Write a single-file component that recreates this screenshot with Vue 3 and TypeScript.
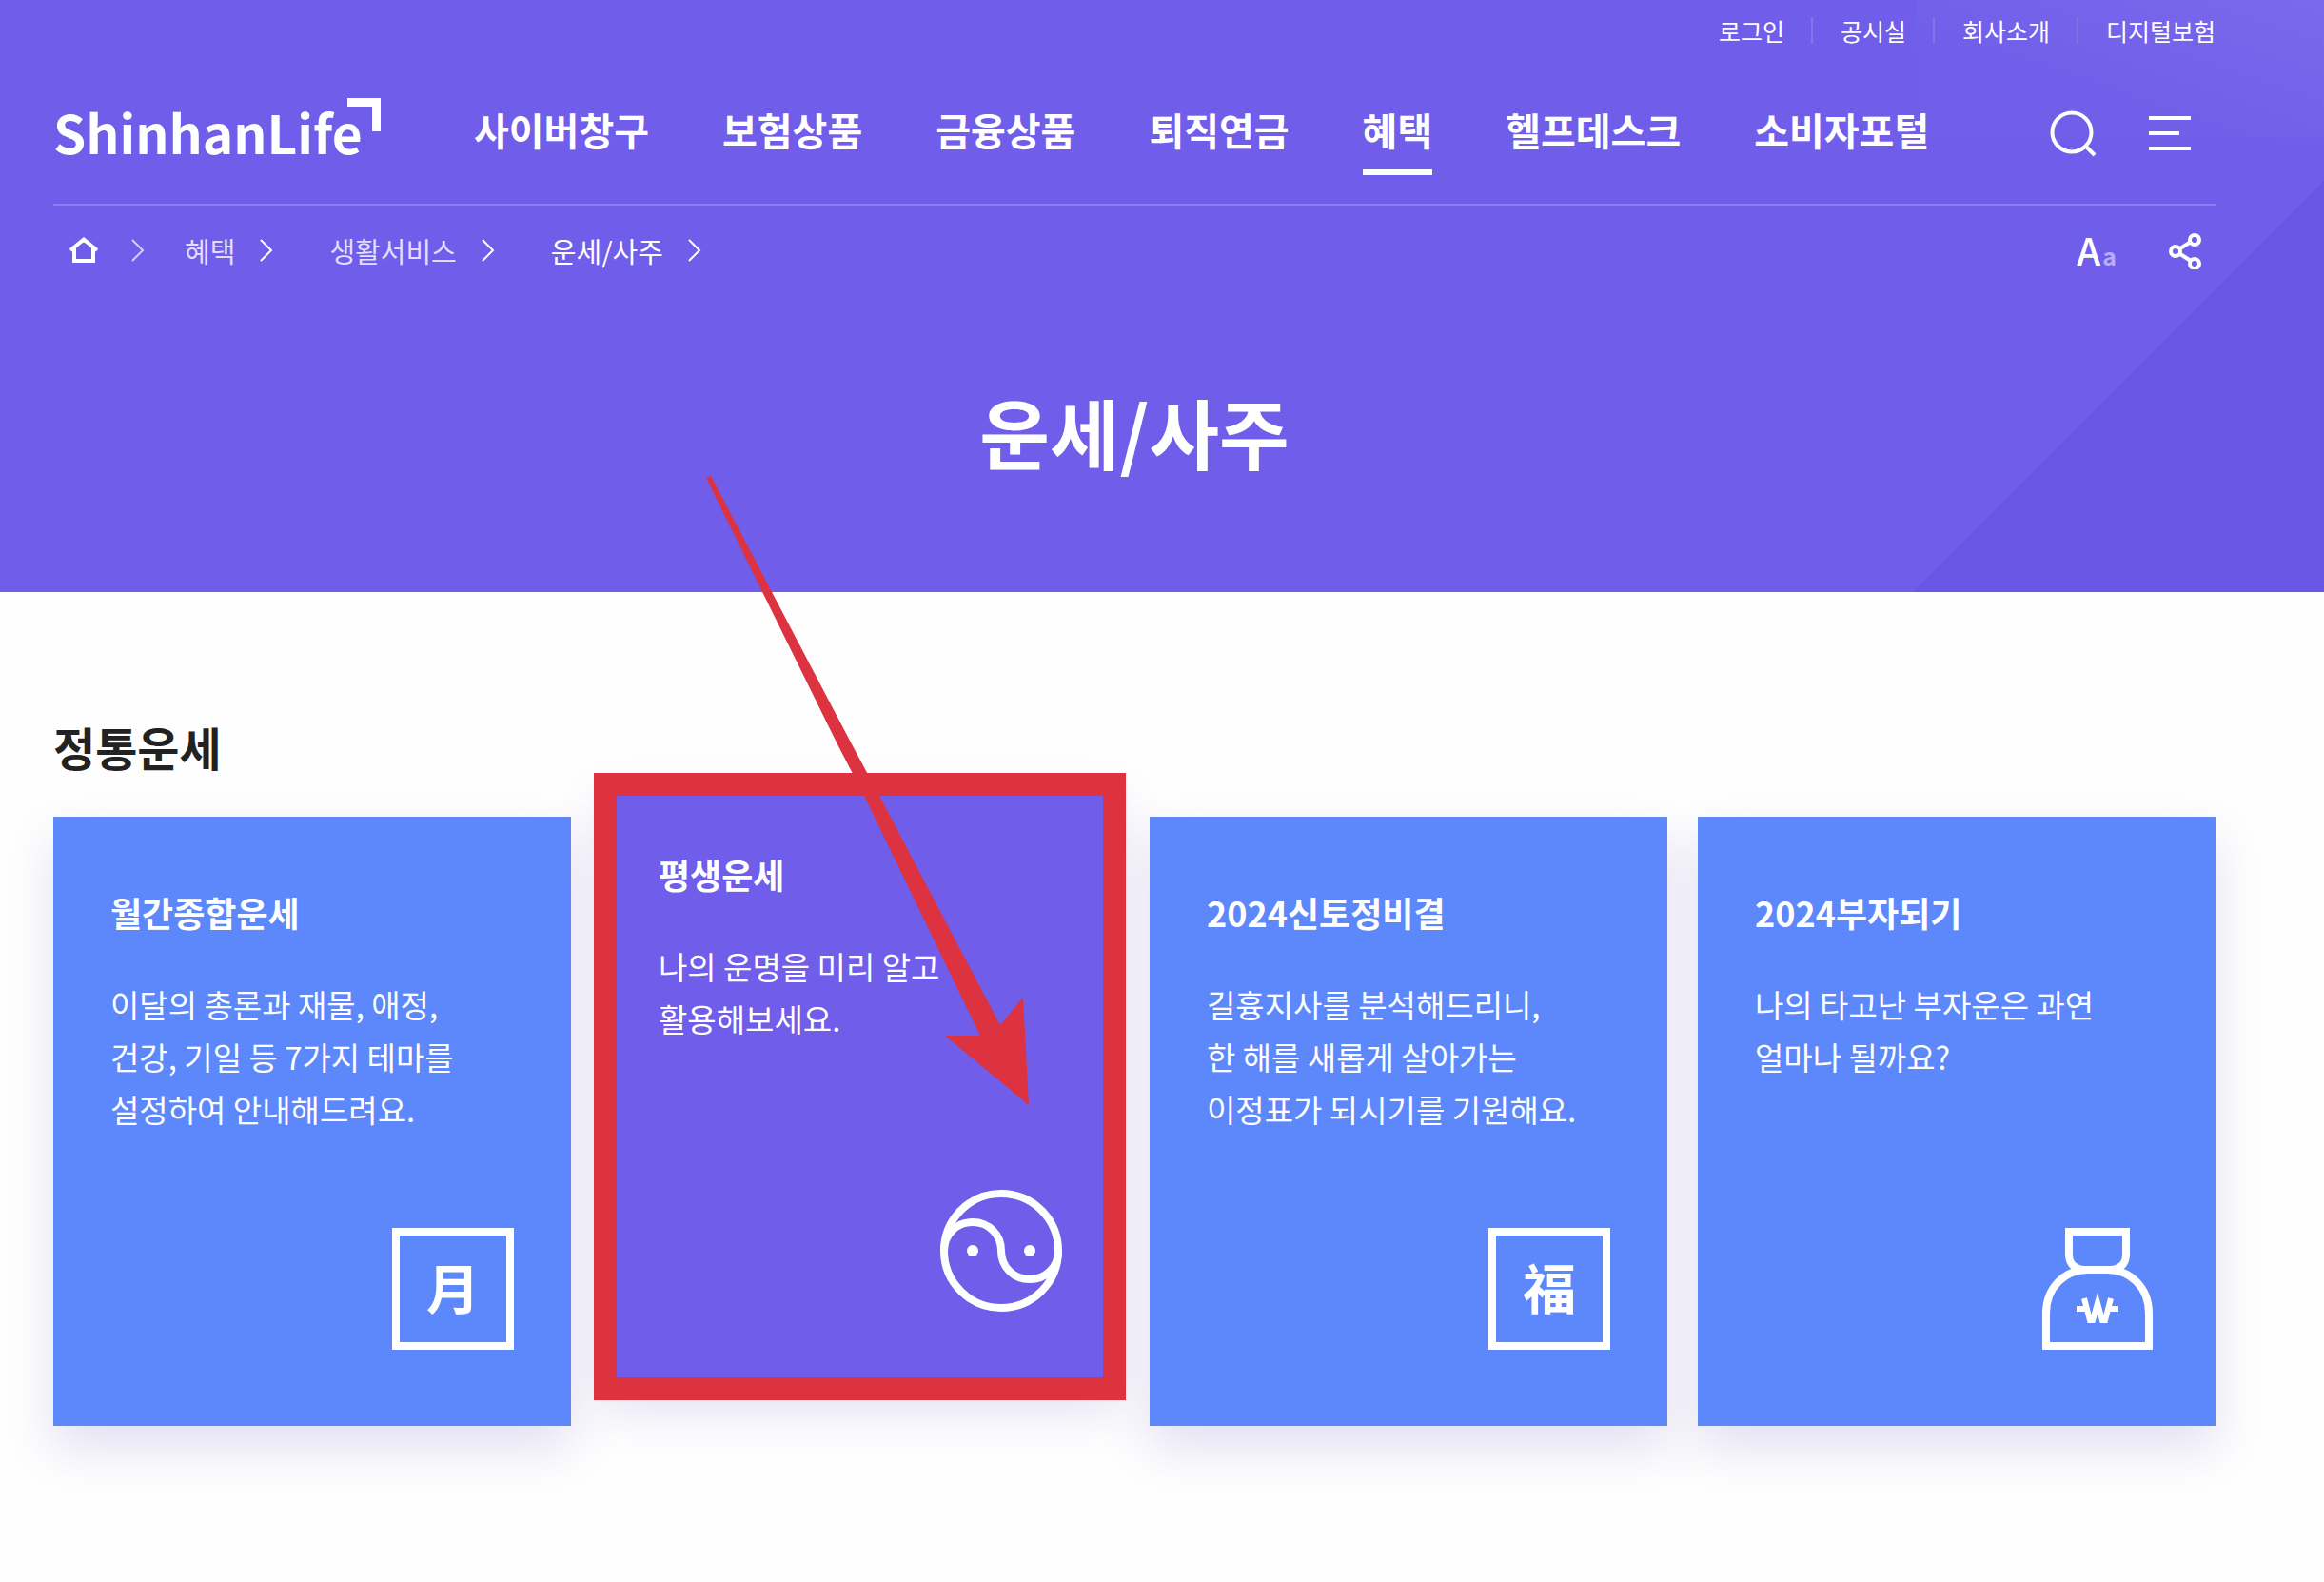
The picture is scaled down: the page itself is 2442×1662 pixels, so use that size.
<script setup lang="ts">
interface Crumb {
  label: string
  current: boolean
}

interface FortuneCard {
  title: string
  lines: string[]
  icon: 'month' | 'taegeuk' | 'luck' | 'bag'
  active: boolean
}

const utilities: string[] = ['로그인', '공시실', '회사소개', '디지털보험']

const menu: string[] = ['사이버창구', '보험상품', '금융상품', '퇴직연금', '혜택', '헬프데스크', '소비자포털']
const activeMenu = '혜택'

const crumbs: Crumb[] = [
  { label: '혜택', current: false },
  { label: '생활서비스', current: false },
  { label: '운세/사주', current: true },
]

const cards: FortuneCard[] = [
  {
    title: '월간종합운세',
    lines: ['이달의 총론과 재물, 애정,', '건강, 기일 등 7가지 테마를', '설정하여 안내해드려요.'],
    icon: 'month',
    active: false,
  },
  {
    title: '평생운세',
    lines: ['나의 운명을 미리 알고', '활용해보세요.'],
    icon: 'taegeuk',
    active: true,
  },
  {
    title: '2024신토정비결',
    lines: ['길흉지사를 분석해드리니,', '한 해를 새롭게 살아가는', '이정표가 되시기를 기원해요.'],
    icon: 'luck',
    active: false,
  },
  {
    title: '2024부자되기',
    lines: ['나의 타고난 부자운은 과연', '얼마나 될까요?'],
    icon: 'bag',
    active: false,
  },
]
</script>

<template>
  <div class="page">
    <header class="hero">
      <ul class="utility">
        <li v-for="item in utilities" :key="item"><a href="#">{{ item }}</a></li>
      </ul>

      <div class="main-bar">
        <a class="logo" href="#">ShinhanLife</a>
        <nav class="menu" aria-label="주 메뉴">
          <a v-for="item in menu" :key="item" href="#" :class="{ active: item === activeMenu }">{{ item }}</a>
        </nav>
        <div class="actions">
          <button type="button" aria-label="검색">
            <svg width="50" height="50" viewBox="0 0 50 50" fill="none" stroke="#fff" stroke-width="4">
              <circle cx="23" cy="24" r="20.500" />
              <path d="M38 39l9 9" />
            </svg>
          </button>
          <button type="button" aria-label="전체메뉴">
            <svg width="44" height="36" viewBox="0 0 44 36" fill="#fff">
              <path d="M0 0h44v4H0zM0 16h32v4H0zM0 32h44v4H0z" />
            </svg>
          </button>
        </div>
      </div>

      <div class="sub-bar">
        <nav class="crumbs" aria-label="현재 위치">
          <a class="home" href="#" aria-label="홈">
            <svg width="32" height="30" viewBox="0 0 32 30" fill="none" stroke="#fff" stroke-width="4">
              <path d="M2 15L16 3.500L30 15M6 13V26H26V13" stroke-linejoin="miter" />
            </svg>
          </a>
          <svg class="chevron faint" width="14" height="24" viewBox="0 0 14 24" fill="none" stroke="#fff" stroke-width="2">
            <path d="M1 1l11 11L1 23" />
          </svg>
          <template v-for="crumb in crumbs" :key="crumb.label">
            <a class="crumb" :class="{ current: crumb.current }" href="#">{{ crumb.label }}</a>
            <svg class="chevron" width="14" height="24" viewBox="0 0 14 24" fill="none" stroke="#fff" stroke-width="2">
              <path d="M1 1l11 11L1 23" />
            </svg>
          </template>
        </nav>
        <div class="tools">
          <button class="text-size" type="button" aria-label="글자 크기"><span>A</span><small>a</small></button>
          <button type="button" aria-label="공유하기">
            <svg width="36" height="40" viewBox="0 0 36 40" fill="none" stroke="#fff" stroke-width="4">
              <path d="M13 18L24 11M13 24L24 31" />
              <circle cx="8" cy="21" r="5" />
              <circle cx="28" cy="9" r="5" />
              <circle cx="28" cy="34" r="5" />
            </svg>
          </button>
        </div>
      </div>

      <h1>운세/사주</h1>
    </header>

    <main class="content">
      <h2>정통운세</h2>
      <div class="cards">
        <a v-for="card in cards" :key="card.title" class="card" :class="{ active: card.active }" href="#">
          <h3>{{ card.title }}</h3>
          <p>
            <span v-for="line in card.lines" :key="line">{{ line }}</span>
          </p>
          <span v-if="card.icon === 'month'" class="icon stamp" lang="zh">月</span>
          <span v-else-if="card.icon === 'luck'" class="icon stamp" lang="zh">福</span>
          <svg v-else-if="card.icon === 'taegeuk'" class="icon" viewBox="0 0 128 128" fill="none" stroke="#fff" stroke-width="8">
            <circle cx="64" cy="64" r="60" />
            <path d="M4 64C4 46 18 34 34 34C51 34 64 47 64 64C64 81 77 94 94 94C110 94 124 82 124 64" />
            <circle cx="34" cy="64" r="6" fill="#fff" stroke="none" />
            <circle cx="94" cy="64" r="6" fill="#fff" stroke="none" />
          </svg>
          <svg v-else class="icon" viewBox="0 0 128 128" fill="none" stroke="#fff" stroke-width="8">
            <path d="M34 4H94V28C94 38 87 44 78 44H50C41 44 34 38 34 28Z" />
            <path d="M10 124V90C10 62 30 44 54 44H74C98 44 118 62 118 90V124Z" />
            <path d="M50 74L56 97H59L64 79L69 97H72L78 74" stroke-width="6" />
            <path d="M42 85H53M75 85H86" stroke-width="6" />
          </svg>

          <svg v-if="card.active" class="arrow" width="544" height="640" viewBox="0 0 544 640" aria-hidden="true">
            <path d="M110 -316L115 -318L262 -38L292 18L419 259L443 230L449 343L361 270L398 270L276 18L247 -38Z" fill="#dd323f" />
          </svg>
        </a>
      </div>
    </main>
  </div>
</template>

<style>
body {
  margin: 0;
  background: #fff;
}
</style>

<style scoped>
.page {
  min-height: 100vh;
  background: #fefefe;
  color: #222;
  font-family: 'Noto Sans CJK KR', 'Noto Sans', sans-serif;
}

a {
  color: inherit;
  text-decoration: none;
}

button {
  display: flex;
  padding: 0;
  border: 0;
  background: none;
  color: inherit;
  font: inherit;
  cursor: pointer;
}

h1,
h2,
h3,
p,
ul {
  margin: 0;
  padding: 0;
}

.hero {
  box-sizing: border-box;
  min-height: 622px;
  padding: 0 114px 0 56px;
  color: #fff;
  background:
    linear-gradient(135deg, transparent 50%, #6a57e6 50%) right bottom / 432px 432px no-repeat,
    linear-gradient(to top right, #715ee9 30%, #7a68ed) right top / 428px 145px no-repeat,
    #705dea;
}

.utility {
  display: flex;
  justify-content: flex-end;
  align-items: center;
  height: 64px;
  list-style: none;
  font-size: 25px;
  line-height: 28px;
}

.utility li + li {
  margin-left: 28px;
  padding-left: 29px;
  border-left: 2px solid #8575ed;
}

.main-bar {
  display: flex;
  align-items: center;
  height: 148px;
  padding-bottom: 2px;
  border-bottom: 2px solid #8d7eee;
}

.logo {
  position: relative;
  width: 344px;
  font-size: 55px;
  font-weight: 700;
  line-height: 72px;
}

.logo::after {
  content: '';
  position: absolute;
  top: 1px;
  right: 0;
  width: 26px;
  height: 26px;
  border-top: 9px solid #fff;
  border-right: 9px solid #fff;
}

.menu {
  display: flex;
  gap: 77px;
  margin-left: 98px;
  font-size: 40px;
  font-weight: 700;
  line-height: 84px;
}

.menu a {
  border-bottom: 6px solid transparent;
  border-top: 2px solid transparent;
}

.menu a.active {
  border-bottom-color: #fff;
}

.actions {
  display: flex;
  align-items: center;
  gap: 54px;
  margin-left: auto;
  padding-top: 4px;
  padding-right: 26px;
}

.sub-bar {
  display: flex;
  justify-content: space-between;
  align-items: center;
  height: 94px;
}

.crumbs {
  display: flex;
  align-items: center;
  padding-left: 16px;
  font-size: 29px;
  line-height: 40px;
}

.home {
  display: flex;
  margin-right: 34px;
}

.crumb {
  margin-left: 59px;
  color: #e2deff;
}

.faint + .crumb {
  margin-left: 42px;
}

.crumb.current {
  color: #fff;
}

.chevron {
  margin-left: 26px;
}

.chevron.faint {
  margin-left: 0;
  opacity: 0.7;
}

.tools {
  display: flex;
  align-items: center;
  gap: 54px;
  padding-right: 14px;
}

.text-size {
  align-items: baseline;
  gap: 2px;
  padding-top: 4px;
  font-size: 40px;
  font-weight: 500;
  line-height: 48px;
}

.text-size small {
  color: #b8aef6;
  font-size: 25px;
  font-weight: 700;
}

h1 {
  padding-top: 82px;
  font-size: 80px;
  font-weight: 700;
  line-height: 120px;
  text-align: center;
}

.content {
  padding: 126px 114px 164px 56px;
}

h2 {
  margin-bottom: 38px;
  font-size: 48px;
  font-weight: 700;
  line-height: 72px;
}

.cards {
  display: grid;
  grid-template-columns: repeat(4, 1fr);
  gap: 32px;
}

.card {
  position: relative;
  display: flex;
  flex-direction: column;
  box-sizing: border-box;
  min-height: 640px;
  padding: 74px 60px 80px;
  background: #5d88fb;
  box-shadow: 0 24px 48px rgba(90, 70, 180, 0.16);
  color: #fff;
}

.card.active {
  z-index: 1;
  margin: -40px 0 40px;
  background: #705dea;
}

.card.active::before {
  content: '';
  position: absolute;
  inset: -6px -7px -13px -8px;
  border: 24px solid #dd323f;
}

h3 {
  margin-bottom: 44px;
  font-size: 36px;
  font-weight: 700;
  line-height: 52px;
}

.card p {
  font-size: 33px;
  line-height: 55px;
  white-space: nowrap;
}

.card p span {
  display: block;
}

.icon {
  box-sizing: border-box;
  width: 128px;
  height: 128px;
  margin-top: auto;
  margin-left: auto;
}

.stamp {
  border: 8px solid #fff;
  font-family: 'Noto Sans CJK SC', sans-serif;
  font-size: 56px;
  font-weight: 700;
  line-height: 106px;
  text-align: center;
}

.arrow {
  position: absolute;
  top: 0;
  left: 0;
  overflow: visible;
  pointer-events: none;
}
</style>
